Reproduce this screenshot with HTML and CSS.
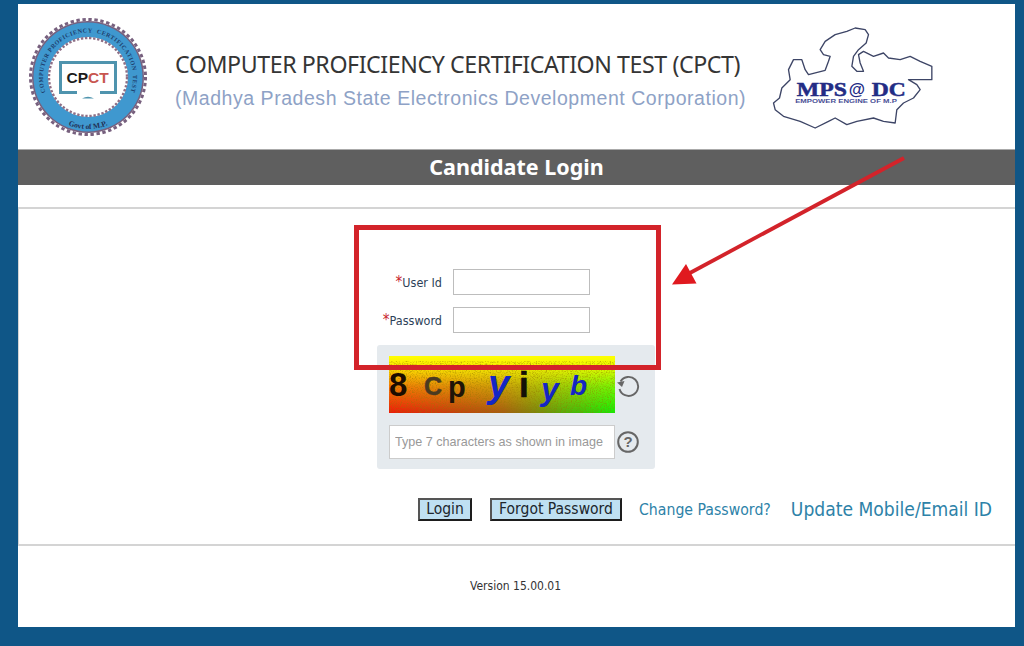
FILE: index.html
```html
<!DOCTYPE html>
<html lang="en">
<head>
<meta charset="utf-8">
<title>Candidate Login</title>
<link rel="stylesheet" href="styles.css">
</head>
<body>
<main class="sheet">
  <header class="brand">
    <svg class="seal" viewBox="0 0 120 120" width="120" height="120" aria-hidden="true">
      <defs>
        <path id="sealTop" d="M26 90 A45 45 0 1 1 94 90"/>
        <path id="sealBot" d="M8 60 A52 52 0 0 0 112 60"/>
      </defs>
      <circle cx="60" cy="60" r="57.500" fill="none" stroke="#77607e" stroke-width="3" stroke-dasharray="3.400 2.620"/>
      <circle cx="60" cy="60" r="56" fill="#77607e"/>
      <circle cx="60" cy="60" r="54.500" fill="#3f98cf"/>
      <circle cx="60" cy="60" r="40" fill="#fff"/>
      <circle cx="60" cy="60" r="39" fill="none" stroke="#8e6f86" stroke-width="2.400" stroke-dasharray="2.400 1.700"/>
      <text class="seal-ring"><textPath href="#sealTop" startOffset="50%" text-anchor="middle">COMPUTER PROFICIENCY  CERTIFICATION  TEST</textPath></text>
      <text class="seal-ring seal-govt"><textPath href="#sealBot" startOffset="50%" text-anchor="middle">Govt of M.P.</textPath></text>
      <path d="M49 75.500H32.500V45.500H87.500V75.500H72" fill="none" stroke="#4f94ae" stroke-width="3"/>
      <path d="M54 81.500q6-3.500 12 0z" fill="#4f94ae"/>
      <text class="seal-cp" x="38.500" y="66">CP<tspan class="seal-ct">CT</tspan></text>
    </svg>
    <div class="brand-text">
      <h1>COMPUTER PROFICIENCY CERTIFICATION TEST (CPCT)</h1>
      <p>(Madhya Pradesh State Electronics Development Corporation)</p>
    </div>
    <svg class="map" viewBox="90 70 500 330" width="167" height="110" aria-hidden="true">
      <path class="map-line" d="M100 310L118 295 125 265 150 240 145 210 160 180 185 180 195 210 205 225 255 212 265 185 270 170 250 165 240 150 255 125 285 105 320 95 345 85 375 90 385 105 378 130 355 150 340 170 335 200 350 215 370 215 360 190 355 165 370 155 400 170 430 160 445 175 480 180 510 170 540 185 575 200 575 240 505 240 530 255 540 270 520 295 490 310 470 330 465 370 430 365 400 355 350 365 320 375 285 355 265 365 225 385 180 365 130 350 105 330Z"/>
      <text class="map-name" x="170" y="290" textLength="150" lengthAdjust="spacingAndGlyphs">MPS</text>
      <text class="map-at" x="326" y="286">@</text>
      <text class="map-name" x="395" y="290" textLength="102" lengthAdjust="spacingAndGlyphs">DC</text>
      <text class="map-sub" x="165" y="311" textLength="305" lengthAdjust="spacingAndGlyphs">EMPOWER ENGINE OF M.P</text>
    </svg>
  </header>
  <h2 class="bar">Candidate Login</h2>
  <section class="panel">
    <form class="form">
      <div class="fields">
        <label class="label" for="uid"><span class="req">*</span>User Id</label>
        <input class="input" id="uid" type="text">
        <label class="label" for="pwd"><span class="req">*</span>Password</label>
        <input class="input" id="pwd" type="password">
      </div>
      <div class="captcha">
        <div class="captcha-img">
          <svg class="noise" aria-hidden="true" width="226" height="57"><filter id="grain"><feTurbulence type="fractalNoise" baseFrequency="0.800" numOctaves="2" seed="4"/><feColorMatrix values="0 0 0 0 0.3  0 0 0 0 0.18  0 0 0 0 0  1.400 0 0 0 -0.620"/></filter><rect y="10" width="226" height="47" filter="url(#grain)"/></svg>
          <span class="cc c1">8</span><span class="cc c2">C</span><span class="cc c3">p</span><span class="cc c4">y</span><span class="cc c5">i</span><span class="cc c6">y</span><span class="cc c7">b</span>
        </div>
        <svg class="icon" viewBox="0 0 24 24" width="24" height="24" aria-hidden="true"><path d="M4.500 8.500A9.500 9.500 0 1 1 3.500 16" fill="none" stroke="#666" stroke-width="1.900"/><path d="M1 9.500L8.500 8 6 14z" fill="#666"/></svg>
        <input class="captcha-input" type="text" placeholder="Type 7 characters as shown in image">
        <svg class="icon" viewBox="0 0 24 24" width="24" height="24" aria-hidden="true"><circle cx="12" cy="12" r="9.800" fill="none" stroke="#666" stroke-width="2"/><text class="help" x="12" y="17.200" text-anchor="middle">?</text></svg>
      </div>
      <div class="actions">
        <button class="btn" type="button">Login</button>
        <button class="btn btn-wide" type="button">Forgot Password</button>
        <a class="link" href="#">Change Password?</a>
        <a class="link link-big" href="#">Update Mobile/Email ID</a>
      </div>
    </form>
  </section>
  <footer class="foot">Version 15.00.01</footer>
</main>
<svg class="annot" viewBox="0 0 1024 646" width="1024" height="646" aria-hidden="true">
  <rect x="356.500" y="227.500" width="302" height="140" fill="none" stroke="#d3232a" stroke-width="5"/>
  <path d="M904 158L688 274" stroke="#d3232a" stroke-width="3.800" fill="none"/>
  <path d="M672 284.500L686 264 696.500 283.500z" fill="#e0191f"/>
</svg>
</body>
</html>
```
FILE: styles.css
```css
* { box-sizing: border-box; }
html, body { margin: 0; height: 646px; overflow: hidden; }
body {
  background: #0f5687;
  padding: 4px 9px 19px 18px;
  font-family: "Liberation Sans", Arial, sans-serif;
  position: relative;
}
.sheet { background: #fff; height: 623px; display: flex; flex-direction: column; }

.brand { height: 145px; display: flex; align-items: flex-start; position: relative; }
.seal { margin: 13px 0 0 10px; flex: none; }
.seal-ring { font: bold 6.100px "Liberation Serif", serif; fill: #1d3f6e; letter-spacing: .5px; white-space: pre; }
.seal-govt { font-size: 7.500px; fill: #233055; letter-spacing: 0; }
.seal-cp { font: bold 15.500px "Liberation Sans", sans-serif; fill: #1c1c1c; }
.seal-ct { fill: #c8564f; }
.brand-text { margin: 44px 0 0 27px; width: 590px; flex: none; }
.brand-text h1 {
  margin: 0;
  font: 400 23.200px/32px "Noto Sans", "Open Sans", sans-serif;
  color: #353535;
  letter-spacing: -.42px;
  white-space: nowrap;
}
.brand-text p {
  margin: 6px 0 0;
  font: 400 19.500px/24px "Liberation Sans", sans-serif;
  color: #8ea2c6;
  letter-spacing: .54px;
  white-space: nowrap;
}
.map { margin: 19px 0 0 5px; flex: none; }
.map-line { fill: #fff; stroke: #3d4566; stroke-width: 4; stroke-linejoin: round; }
.map-name { font: bold 58px "Liberation Serif", serif; fill: #232c85; stroke: #232c85; stroke-width: 1.500; }
.map-at { font: bold 50px "Liberation Sans", sans-serif; fill: #232c85; }
.map-sub { font: bold 14px "Liberation Sans", sans-serif; fill: #4a5096; }

.bar {
  margin: 0;
  height: 36px;
  background: #5f5f5f;
  border-top: 1px solid #aaa;
  color: #fff;
  font: 700 21.500px/34px "Noto Sans", "Open Sans", sans-serif;
  text-align: center;
}

.panel {
  margin-top: 22px;
  height: 339px;
  border: solid #d4d4d4;
  border-width: 2px 0 2px 1px;
}
.form { padding: 60px 0 0 303px; }
.fields {
  display: grid;
  grid-template-columns: 120px 137px;
  column-gap: 11px;
  row-gap: 12px;
}
.label {
  align-self: center;
  text-align: right;
  font: 12.500px "DejaVu Sans Condensed", Tahoma, sans-serif;
  color: #2d3f58;
}
.req { color: #c8232c; font-size: 15px; line-height: 1; }
.input {
  height: 26px;
  border: 1px solid #bdbdbd;
  background: #fff;
  margin: 0;
  display: block;
}
.captcha {
  margin: 12px 0 0 55px;
  width: 278px;
  height: 124px;
  padding: 11px 0 0 12px;
  background: #e5eaee;
  border-radius: 3px;
  display: grid;
  grid-template-columns: 226px 26px;
  grid-template-rows: 57px 34px;
  row-gap: 12px;
  align-items: center;
  justify-items: center;
}
.captcha-img {
  width: 226px;
  height: 57px;
  position: relative;
  overflow: hidden;
  background:
    linear-gradient(to bottom, rgb(255, 255, 0) 0, rgba(255, 255, 0, .9) 18%, rgba(255, 255, 0, .4) 55%, rgba(255, 255, 0, 0) 100%),
    linear-gradient(to right, #f01808 0, #a85a10 50%, #10f004 100%);
}
.noise { position: absolute; left: 0; top: 0; display: block; }
.cc { position: absolute; line-height: 1; }
.c1 { left: 0; top: 12px; font: bold 33px/1 "Liberation Sans", sans-serif; color: #1c0c00; }
.c2 { left: 35px; top: 18px; font: bold 25px/1 "Liberation Sans", sans-serif; color: #4a3a20; -webkit-text-stroke: .5px #4a3a20; }
.c3 { left: 59px; top: 17px; font: bold 29px/1 "Liberation Sans", sans-serif; color: #201408; }
.c4 { left: 99px; top: 8px; font: italic bold 39px/1 "Liberation Sans", sans-serif; color: #1426c4; }
.c5 { left: 130px; top: 11px; font: bold 35px/1 "Liberation Sans", sans-serif; color: #141008; -webkit-text-stroke: .6px #141008; }
.c6 { left: 152px; top: 17px; font: italic bold 32px/1 "Liberation Sans", sans-serif; color: #1426c4; }
.c7 { left: 181px; top: 16px; font: italic bold 28px/1 "Liberation Sans", sans-serif; color: #1426c4; }
.icon { display: block; }
.help { font: bold 15px "Liberation Sans", sans-serif; fill: #666; }
.captcha-input {
  width: 226px;
  height: 34px;
  border: 1px solid #ccc;
  background: #fff;
  padding: 0 5px;
  margin: 0;
  font: 12.600px "Liberation Sans", sans-serif;
}
.captcha-input::placeholder { color: #999; opacity: 1; }

.actions {
  margin: 29px 0 0 96px;
  display: flex;
  align-items: center;
  white-space: nowrap;
  height: 23px;
}
.btn {
  height: 23px;
  width: 54px;
  padding: 0 0 2px;
  margin: 0 18px 0 0;
  background: #bfe0f2;
  border: 2px solid;
  border-color: #555 #1d1d1d #1d1d1d #555;
  color: #20262c;
  font: 15.500px "DejaVu Sans Condensed", Tahoma, sans-serif;
}
.btn-wide { width: 132px; margin-right: 17px; }
.link {
  color: #2d82a8;
  text-decoration: none;
  font: 15.700px "DejaVu Sans Condensed", Tahoma, sans-serif;
}
.link-big { margin-left: 20px; font-size: 19.100px; }

.foot {
  padding: 33px 0 0 452px;
  font: 12px "DejaVu Sans Condensed", Tahoma, sans-serif;
  color: #333;
}

.annot { position: absolute; left: 0; top: 0; pointer-events: none; }
```
